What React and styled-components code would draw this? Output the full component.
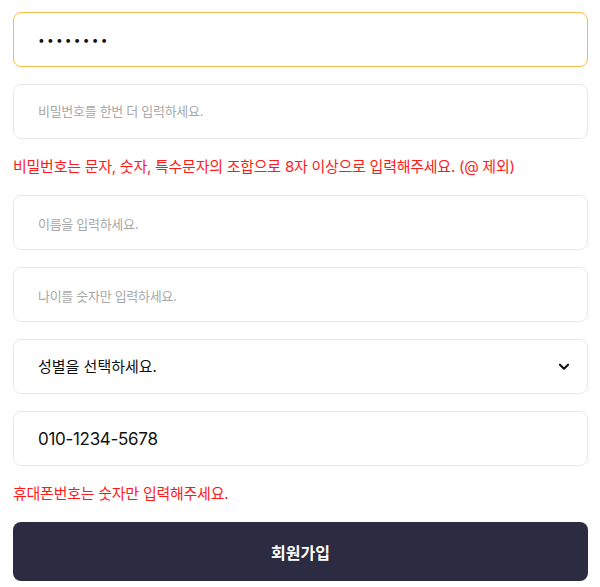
import React from 'react';
import styled, {createGlobalStyle} from 'styled-components';

const GlobalStyle = createGlobalStyle`
  body {
    margin: 0;
    background: #fff;
    font-family: "Inter", "Noto Sans CJK KR", sans-serif;
  }
`

const Form = styled.form`
  display: flex;
  flex-direction: column;
  gap: 17px;
  padding: 12px 12px 0 13px;
`

const Input = styled.input`
  box-sizing: border-box;
  width: 100%;
  height: 55px;
  padding: 0 24px;
  border: 1px solid ${props => props.focused ? "#fbbd4f" : "#e8e8e8"};
  border-radius: 8px;
  outline: none;
  background: #fff;
  color: #111;
  font-family: "Inter", "Noto Sans CJK KR", sans-serif;
  font-size: ${props => props.type === "password" ? "12px" : "17px"};
  letter-spacing: ${props => props.type === "password" ? "2.2px" : "-0.3px"};
  &::placeholder {
    color: #a8a8a8;
    font-size: 13px;
    letter-spacing: -0.3px;
  }
`

const SelectWrap = styled.div`
  position: relative;
`

const Select = styled.select`
  box-sizing: border-box;
  width: 100%;
  height: 55px;
  padding: 0 24px;
  border: 1px solid #e8e8e8;
  border-radius: 8px;
  outline: none;
  appearance: none;
  background: #fff;
  color: #111;
  font-family: "Inter", "Noto Sans CJK KR", sans-serif;
  font-size: 15px;
`

const Chevron = styled.svg`
  position: absolute;
  right: 17px;
  top: 21px;
  pointer-events: none;
`

const ErrorText = styled.p`
  margin: 0;
  line-height: 22px;
  color: #ff1a1a;
  font-size: 15px;
  letter-spacing: -0.25px;
`

const Submit = styled.button`
  height: 59px;
  border: none;
  border-radius: 8px;
  background: #2b2c42;
  color: #fff;
  font-family: "Inter", "Noto Sans CJK KR", sans-serif;
  font-size: 16px;
  font-weight: 700;
`

const App = () => {
    return (
        <>
            <GlobalStyle/>
            <Form onSubmit={e => e.preventDefault()}>
                <Input type="password" defaultValue="12345678" focused/>
                <Input type="password" placeholder="비밀번호를 한번 더 입력하세요."/>
                <ErrorText>비밀번호는 문자, 숫자, 특수문자의 조합으로 8자 이상으로 입력해주세요. (@ 제외)</ErrorText>
                <Input type="text" placeholder="이름을 입력하세요."/>
                <Input type="text" placeholder="나이를 숫자만 입력하세요."/>
                <SelectWrap>
                    <Select defaultValue="">
                        <option value="">성별을 선택하세요.</option>
                        <option value="m">남성</option>
                        <option value="f">여성</option>
                    </Select>
                    <Chevron width="14" height="14" viewBox="0 0 24 24" fill="none"
                             stroke="#111" strokeWidth="3.5" strokeLinecap="round" strokeLinejoin="round">
                        <path d="M5 8l7 7 7-7"/>
                    </Chevron>
                </SelectWrap>
                <Input type="text" defaultValue="010-1234-5678"/>
                <ErrorText>휴대폰번호는 숫자만 입력해주세요.</ErrorText>
                <Submit type="submit">회원가입</Submit>
            </Form>
        </>
    );
};

export default App;
